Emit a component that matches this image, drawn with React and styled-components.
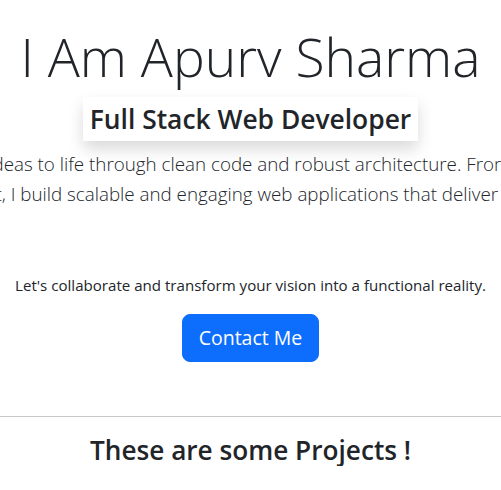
import React from "react";
import styled, { createGlobalStyle } from "styled-components";

const GlobalStyle = createGlobalStyle`
  body {
    margin: 0;
    font-family: "Open Sans", "Noto Sans", sans-serif;
    color: #212529;
    background: #fff;
    overflow-x: hidden;
  }
`;

export default function App() {
  return (
    <>
      <GlobalStyle />
      <Hero>
        <Title>I Am Apurv Sharma</Title>
        <Role>Full Stack Web Developer</Role>
        <Lead>
          <span>I bring ideas to life through clean code and robust architecture. From design</span>
          <span>deployment, I build scalable and engaging web applications that deliver great value.</span>
        </Lead>
        <Note>Let's collaborate and transform your vision into a functional reality.</Note>
        <ContactButton type="button">Contact Me</ContactButton>
      </Hero>
      <Divider />
      <SectionTitle>These are some Projects !</SectionTitle>
    </>
  );
}

const Hero = styled.section`
  display: flex;
  flex-direction: column;
  align-items: center;
  padding-top: 25px;
`;

const Title = styled.h1`
  margin: 0;
  font-size: 53.4px;
  font-weight: 300;
  line-height: 64px;
  white-space: nowrap;
`;

const Role = styled.h2`
  margin: 8px 0 0;
  padding: 6px 7px;
  font-size: 26.4px;
  font-weight: 600;
  line-height: 32px;
  background: #fff;
  box-shadow: 0 0.5rem 1rem rgba(0, 0, 0, 0.15);
  white-space: nowrap;
`;

const Lead = styled.p`
  align-self: stretch;
  display: flex;
  flex-direction: column;
  align-items: center;
  margin: 8px 0 0;
  overflow: hidden;
  font-size: 18.8px;
  font-weight: 300;
  line-height: 30px;
  span {
    white-space: nowrap;
  }
`;

const Note = styled.p`
  margin: 64px 0 0;
  font-size: 15.1px;
  line-height: 24px;
  white-space: nowrap;
`;

const ContactButton = styled.button`
  margin-top: 17px;
  padding: 8px 16px;
  font-family: inherit;
  font-size: 19.5px;
  line-height: 30px;
  color: #fff;
  background: #0d6efd;
  border: 1px solid #0d6efd;
  border-radius: 8px;
  cursor: pointer;
`;

const Divider = styled.hr`
  margin: 54px 0 0;
  border: 0;
  border-top: 1px solid #c8c9ca;
`;

const SectionTitle = styled.h2`
  margin: 18px 0 0;
  text-align: center;
  font-size: 26.2px;
  font-weight: 600;
  line-height: 1.2;
`;
